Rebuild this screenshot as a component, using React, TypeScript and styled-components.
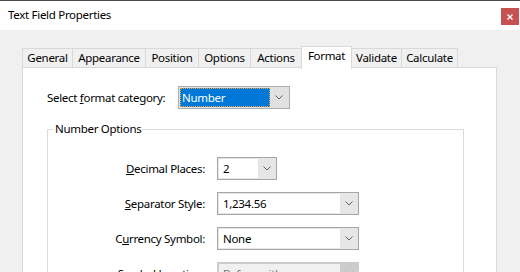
import React from "react";
import styled, { createGlobalStyle } from "styled-components";

const GlobalStyle = createGlobalStyle`
  body {
    margin: 0;
    font-family: "Noto Sans", "Liberation Sans", sans-serif;
    font-size: 11.5px;
    letter-spacing: -0.3px;
    color: #000;
  }
`;

const tabs = [
  { label: "General", w: 51 },
  { label: "Appearance", w: 74 },
  { label: "Position", w: 54 },
  { label: "Options", w: 53 },
  { label: "Actions", w: 52 },
  { label: "Format", w: 51, active: true },
  { label: "Validate", w: 51 },
  { label: "Calculate", w: 57 },
];

const Chevron: React.FC<{ color?: string }> = ({ color = "#606060" }) => (
  <svg width="8" height="5" viewBox="0 0 8 5">
    <path d="M0.5 0.5 L4 4 L7.5 0.5" fill="none" stroke={color} strokeWidth="1" />
  </svg>
);

export default function App() {
  return (
    <>
      <GlobalStyle />
      <Window>
        <TitleBar>
          <Title>Text Field Properties</Title>
          <CloseButton>
            <svg width="6" height="6" viewBox="0 0 6 6">
              <path d="M0.5 0.5 L5.5 5.5 M5.5 0.5 L0.5 5.5" stroke="#fff" strokeWidth="1.4" />
            </svg>
          </CloseButton>
        </TitleBar>
        <Body>
          <TabStrip>
            {tabs.map((t) => (
              <Tab key={t.label} $w={t.w} $active={!!t.active}>
                {t.label}
              </Tab>
            ))}
          </TabStrip>
          <Panel>
            <CategoryRow>
              <CategoryLabel>
                Select <u>f</u>ormat category:
              </CategoryLabel>
              <DropList>
                <Selected>Number</Selected>
                <Arrow>
                  <Chevron />
                </Arrow>
              </DropList>
            </CategoryRow>
            <Group>
              <Legend>Number Options</Legend>
              <FieldGrid>
                <FieldLabel>
                  <u>D</u>ecimal Places:
                </FieldLabel>
                <Combo $w={60}>
                  <ComboText>2</ComboText>
                  <Arrow>
                    <Chevron />
                  </Arrow>
                </Combo>
                <FieldLabel>
                  <u>S</u>eparator Style:
                </FieldLabel>
                <Combo $w={142}>
                  <ComboText>1,234.56</ComboText>
                  <Arrow>
                    <Chevron />
                  </Arrow>
                </Combo>
                <FieldLabel>
                  C<u>u</u>rrency Symbol:
                </FieldLabel>
                <Combo $w={142}>
                  <ComboText>None</ComboText>
                  <Arrow>
                    <Chevron />
                  </Arrow>
                </Combo>
                <FieldLabel>
                  Symbol <u>L</u>ocation:
                </FieldLabel>
                <Combo $w={142} $disabled>
                  <ComboText $disabled>Before with space</ComboText>
                  <Arrow $disabled>
                    <Chevron color="#a0a0a0" />
                  </Arrow>
                </Combo>
              </FieldGrid>
            </Group>
          </Panel>
        </Body>
      </Window>
    </>
  );
}

const Window = styled.div`
  width: 520px;
  height: 272px;
  box-sizing: border-box;
  overflow: hidden;
  border-top: 1px solid #4a4a4a;
  background: #f0f0f0;
  display: flex;
  flex-direction: column;
`;

const TitleBar = styled.div`
  height: 29px;
  flex-shrink: 0;
  background: #fff;
  display: flex;
  justify-content: space-between;
  align-items: flex-start;
  padding-left: 8px;
`;

const Title = styled.div`
  margin-top: 6px;
  line-height: 16px;
`;

const CloseButton = styled.div`
  width: 18px;
  height: 17px;
  margin-top: 7px;
  margin-right: 1px;
  background: #c75050;
  display: flex;
  align-items: center;
  justify-content: center;
`;

const Body = styled.div`
  flex: 1;
  display: flex;
  flex-direction: column;
  padding: 18px 0 0 22px;
`;

const TabStrip = styled.div`
  display: flex;
  align-items: flex-end;
  height: 20px;
  padding-left: 1px;
  position: relative;
  z-index: 1;
`;

const Tab = styled.div<{ $w: number; $active: boolean }>`
  width: ${(p) => p.$w}px;
  box-sizing: border-box;
  margin-left: -1px;
  height: ${(p) => (p.$active ? 23 : 20)}px;
  margin-bottom: ${(p) => (p.$active ? -1 : 0)}px;
  border: 1px solid #d9d9d9;
  border-bottom: ${(p) => (p.$active ? "none" : "1px solid #d9d9d9")};
  background: ${(p) => (p.$active ? "#fff" : "#f0f0f0")};
  position: relative;
  z-index: ${(p) => (p.$active ? 2 : 1)};
  display: flex;
  justify-content: center;
  align-items: ${(p) => (p.$active ? "flex-start" : "center")};
  padding-top: ${(p) => (p.$active ? 1 : 0)}px;
  line-height: 16px;
  white-space: nowrap;
`;

const Panel = styled.div`
  flex: 1;
  width: 475px;
  box-sizing: border-box;
  margin-top: -1px;
  background: #fff;
  border: 1px solid #d9d9d9;
  border-bottom: none;
  padding: 18px 0 0 24px;
`;

const CategoryRow = styled.div`
  display: flex;
  align-items: center;
  height: 23px;
`;

const CategoryLabel = styled.div`
  width: 131px;
  white-space: nowrap;
`;

const DropList = styled.div`
  width: 112px;
  height: 23px;
  box-sizing: border-box;
  border: 1px solid #adadad;
  background: #e1e1e1;
  padding: 1px;
  display: flex;
`;

const Selected = styled.div`
  flex: 1;
  background: #0078d7;
  color: #fff;
  border: 1px dotted #f0a040;
  display: flex;
  align-items: center;
  padding-left: 1px;
  line-height: 16px;
`;

const Arrow = styled.div<{ $disabled?: boolean }>`
  width: 18px;
  flex-shrink: 0;
  display: flex;
  align-items: center;
  justify-content: center;
  background: ${(p) => (p.$disabled ? "#cccccc" : "transparent")};
`;

const Group = styled.fieldset`
  margin: 12px 0 0 0;
  width: 417px;
  box-sizing: border-box;
  border: 1px solid #dcdcdc;
  padding: 20px 0 40px 0;
`;

const Legend = styled.legend`
  margin-left: 6px;
  padding: 0 1px;
  line-height: 16px;
`;

const FieldGrid = styled.div`
  display: grid;
  grid-template-columns: 157px auto;
  column-gap: 12px;
  row-gap: 12px;
  align-items: center;
  justify-items: start;
`;

const FieldLabel = styled.div`
  justify-self: end;
  white-space: nowrap;
`;

const Combo = styled.div<{ $w: number; $disabled?: boolean }>`
  width: ${(p) => p.$w}px;
  height: 23px;
  box-sizing: border-box;
  border: 1px solid ${(p) => (p.$disabled ? "#cccccc" : "#a6a6a6")};
  background: ${(p) => (p.$disabled ? "#cccccc" : "#e6e6e6")};
  display: flex;
`;

const ComboText = styled.div<{ $disabled?: boolean }>`
  flex: 1;
  margin: 1px 0 1px 1px;
  background: ${(p) => (p.$disabled ? "#f0f0f0" : "#fff")};
  color: ${(p) => (p.$disabled ? "#6d6d6d" : "#000")};
  display: flex;
  align-items: center;
  padding-left: 4px;
  line-height: 16px;
  white-space: nowrap;
  overflow: hidden;
`;
